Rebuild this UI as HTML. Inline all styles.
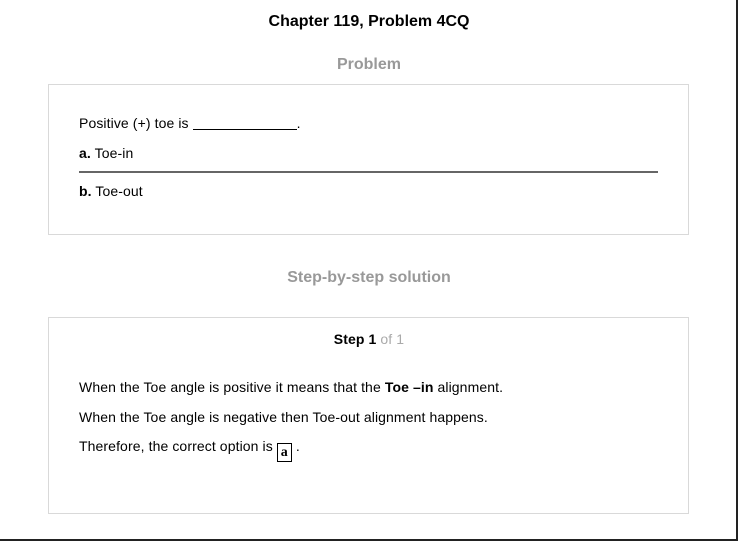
<!DOCTYPE html>
<html><head><style>
body{margin:0;width:738px;height:541px;position:relative;background:#fff;font-family:"Liberation Sans",Arial,sans-serif;color:#000;overflow:hidden}
.a{position:absolute;white-space:nowrap}
.t{font-size:14px;letter-spacing:0.1px}
.box{position:absolute;border:1px solid #d9d9d9;box-sizing:border-box}
</style></head><body>
<div style="position:absolute;left:0;top:0;width:736px;height:539px;border-right:2px solid #222;border-bottom:2px solid #222"></div>
<div class="a" style="left:0;width:738px;text-align:center;top:13px;font-size:16px;font-weight:bold">Chapter 119, Problem 4CQ</div>
<div class="a" style="left:0;width:738px;text-align:center;top:56px;font-size:16px;font-weight:bold;color:#999">Problem</div>
<div class="box" style="left:48px;top:84px;width:641px;height:151px"></div>
<div class="a t" style="left:79px;top:115px">Positive (+) toe is <span style="display:inline-block;width:104px;border-bottom:1px solid #000;height:12px;vertical-align:-2px"></span>.</div>
<div class="a t" style="left:79px;top:145px"><b>a.</b> Toe-in</div>
<div style="position:absolute;left:79px;top:171px;width:579px;height:2px;background:#666"></div>
<div class="a t" style="left:79px;top:183px"><b>b.</b> Toe-out</div>
<div class="a" style="left:0;width:738px;text-align:center;top:269px;font-size:16px;font-weight:bold;color:#999">Step-by-step solution</div>
<div class="box" style="left:48px;top:317px;width:641px;height:197px"></div>
<div class="a t" style="left:0;width:738px;text-align:center;top:331px"><b>Step 1</b> <span style="color:#aaa">of 1</span></div>
<div class="a t" style="left:79px;top:379px">When the Toe angle is positive it means that the <b>Toe –in</b> alignment.</div>
<div class="a t" style="left:79px;top:409px">When the Toe angle is negative then Toe-out alignment happens.</div>
<div class="a t" style="left:79px;top:438px">Therefore, the correct option is <span style="display:inline-block;border:1px solid #000;width:13px;text-align:center;font-family:'Liberation Serif',serif;font-weight:bold;font-size:14px;line-height:17px;vertical-align:-5px">a</span> .</div>
</body></html>
